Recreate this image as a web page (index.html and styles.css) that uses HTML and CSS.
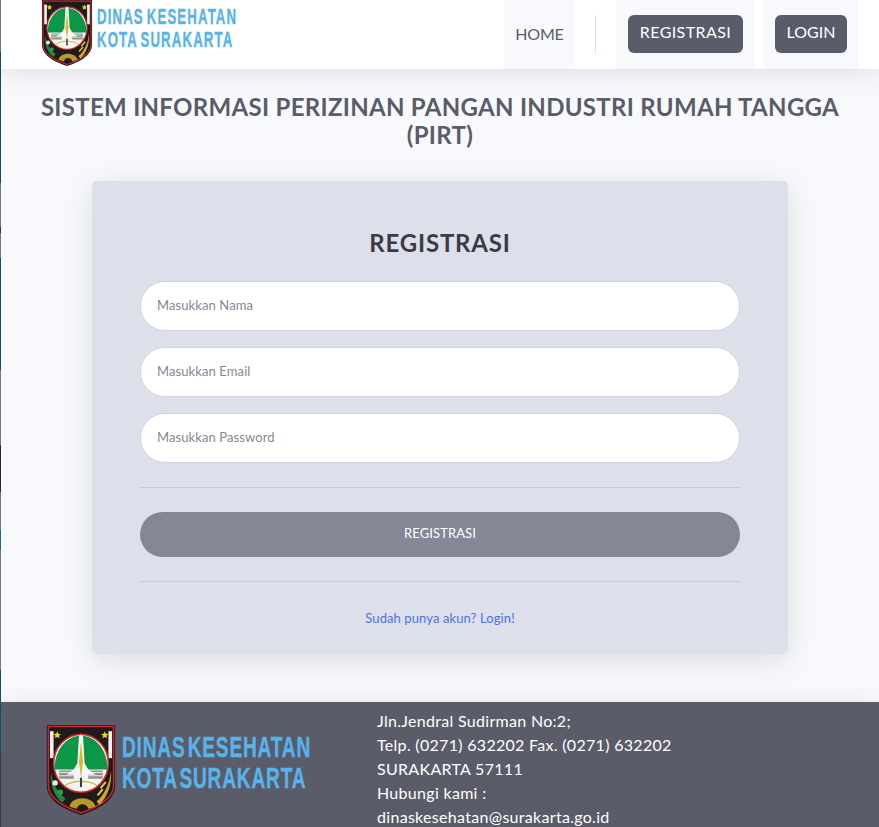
FILE: index.html
```html
<!DOCTYPE html>
<html lang="en">
<head>
    <meta charset="UTF-8">
    <meta name="viewport" content="width=device-width, initial-scale=1.0">
    <title>Registrasi PIRT</title>
    <link rel="stylesheet" href="styles.css">
</head>
<body>
    <svg width="0" height="0" class="defs">
        <symbol id="crest" viewBox="1 1 66 87">
            <path d="M1 1H67V60C67 74 50 83 34 88C18 83 1 74 1 60Z" fill="#1f1b1c"/>
            <path d="M2.5 2.5H65.5V60C65.5 72 49 81 34 86C19 81 2.5 72 2.5 60Z" fill="none" stroke="#d2232a" stroke-width="1.4"/>
            <rect x="4" y="7" width="3.5" height="26" fill="#f2f2f2"/>
            <rect x="60.5" y="7" width="3.5" height="26" fill="#f2f2f2"/>
            <path d="M11 7l1 2.4 2.6.2-2 1.7.7 2.6-2.3-1.4-2.3 1.4.7-2.6-2-1.7 2.6-.2z" fill="#f5d327"/>
            <path d="M57 7l1 2.4 2.6.2-2 1.7.7 2.6-2.3-1.4-2.3 1.4.7-2.6-2-1.7 2.6-.2z" fill="#f5d327"/>
            <ellipse cx="34" cy="38" rx="26.5" ry="28" fill="#f4f4ee" stroke="#d2232a" stroke-width="1.6"/>
            <path d="M8.5 44C8 27 19 11.5 34 11.5C49 11.5 60 27 59.5 44Z" fill="#0a9848"/>
            <path d="M13 45H27V53H13ZM41 45H55V53H41Z" fill="#8f8f8f"/>
            <path d="M13 47H27M13 50H27M41 47H55M41 50H55" stroke="#e8e8e8" stroke-width="1"/>
            <path d="M18 60C25 54 43 54 50 60" fill="none" stroke="#c9b84a" stroke-width="1.2"/>
            <path d="M32 12C32 10 36 10 36 12L37.5 38L41 44L48 49H20L27 44L30.5 38Z" fill="#f7f7f7"/>
            <path d="M34 17L36 37L34 52L32 37Z" fill="#d9b92c"/>
            <rect x="33" y="52" width="2" height="9" fill="#3c3c3c"/>
            <path d="M5 46C6 56 10 65 19 72L16 76C8 70 4 59 5 46Z" fill="#1f8a3e"/>
            <circle cx="9" cy="57" r="2.6" fill="#e6efe6"/>
            <circle cx="14" cy="66" r="2.6" fill="#2aa04c"/>
            <path d="M63 45C62 57 57 68 49 75L52 78C60 70 64 58 63 45Z" fill="#c9aa2c"/>
            <path d="M58 56L53 62M55 63L50 69" stroke="#e0c53c" stroke-width="2"/>
            <path d="M23 80C24 69 46 69 48 80L41 82C40 76 31 76 30 82Z" fill="#b8982a"/>
        </symbol>
    </svg>

    <nav class="topbar">
        <a href="#" class="brand">
            <svg class="brand-crest"><use href="#crest"/></svg>
            <span class="brand-text">
                <span>DINAS KESEHATAN</span>
                <span>KOTA SURAKARTA</span>
            </span>
        </a>
        <ul class="nav-list">
            <li class="nav-item home"><a href="#" class="nav-link">HOME</a></li>
            <li class="divider"></li>
            <li class="nav-item reg"><a href="#" class="nav-btn">REGISTRASI</a></li>
            <li class="nav-item login"><a href="#" class="nav-btn">LOGIN</a></li>
        </ul>
    </nav>

    <main class="content">
        <h1 class="page-title">SISTEM INFORMASI PERIZINAN PANGAN INDUSTRI RUMAH TANGGA (PIRT)</h1>
        <div class="card">
            <h2>REGISTRASI</h2>
            <form>
                <input type="text" class="field" placeholder="Masukkan Nama">
                <input type="email" class="field" placeholder="Masukkan Email">
                <input type="password" class="field" placeholder="Masukkan Password">
                <hr>
                <button type="button" class="submit">REGISTRASI</button>
                <hr>
            </form>
            <a href="#" class="login-link">Sudah punya akun? Login!</a>
        </div>
    </main>

    <footer class="footer">
        <div class="footer-brand">
            <svg class="footer-crest"><use href="#crest"/></svg>
            <span class="footer-text">
                <span>DINAS KESEHATAN</span>
                <span>KOTA SURAKARTA</span>
            </span>
        </div>
        <address class="footer-info">
            Jln.Jendral Sudirman No:2;<br>
            Telp. (0271) 632202 Fax. (0271) 632202<br>
            SURAKARTA 57111<br>
            Hubungi kami :<br>
            dinaskesehatan@surakarta.go.id
        </address>
    </footer>
</body>
</html>
```

FILE: styles.css
```css
* {
    box-sizing: border-box;
}
html, body {
    height: 827px;
    overflow: hidden;
}
body {
    margin: 0;
    padding-left: 1px;
    background-color: #f8f9fc;
    /* sliver of another window showing down the left edge */
    background-image: linear-gradient(to bottom,
        #777 0, #777 52px,
        #1a4a70 52px, #1a4a70 183px,
        #777 183px, #777 227px,
        #333 227px, #333 233px,
        #777 233px, #777 258px,
        #1a4a70 258px, #1a4a70 370px,
        #777 370px, #777 445px,
        #252a30 445px, #252a30 492px,
        #777 492px, #777 530px,
        #1f6a8a 530px, #1f6a8a 550px,
        #777 550px, #777 670px,
        #1a4a70 670px, #1a4a70 752px,
        #3a3a3c 752px, #3a3a3c 827px);
    background-repeat: no-repeat;
    background-size: 1px 100%;
    font-family: Lato, "Open Sans", sans-serif;
    color: #5a5c69;
    display: flex;
    flex-direction: column;
}
a {
    text-decoration: none;
}
.defs {
    position: absolute;
}
.topbar {
    height: 69px;
    flex: none;
    background: white;
    box-shadow: 0 2px 28px rgba(58, 59, 69, 0.15);
    display: flex;
    justify-content: space-between;
    padding: 0 20px 0 40px;
    position: relative;
}
.brand {
    display: flex;
    align-items: flex-start;
}
.brand-crest {
    width: 52px;
    height: 66px;
}
.brand-text {
    display: flex;
    flex-direction: column;
    margin: 5px 0 0 4px;
    color: #56b4ea;
    font: bold 22px/23px "Liberation Sans", sans-serif;
    -webkit-text-stroke: 0.4px #56b4ea;
    transform: scaleX(0.6);
    transform-origin: left top;
    letter-spacing: 1.9px;
    word-spacing: -3px;
    white-space: nowrap;
    width: 140px;
}
.nav-list {
    list-style: none;
    margin: 0;
    padding: 0;
    display: flex;
    font-size: 16px;
}
.nav-item {
    background: #f8f9fc;
    display: flex;
    align-items: center;
    justify-content: center;
}
.home {
    width: 71px;
}
.reg {
    width: 139px;
}
.login {
    width: 96px;
    margin-left: 8px;
}
.divider {
    width: 1px;
    height: 38px;
    margin: 15px 20px 0;
    background: #dddfeb;
}
.nav-link {
    color: #5a5c69;
    padding-bottom: 2px;
    letter-spacing: -0.2px;
}
.nav-btn {
    background: #5a5c69;
    color: white;
    border-radius: 6px;
    height: 38px;
    margin-top: -1px;
    padding: 0 12px;
    line-height: 34px;
}
.reg .nav-btn {
    letter-spacing: 0.4px;
}
.content {
    flex: 1;
    padding: 24px 20px 0;
}
.page-title {
    margin: 0;
    font-size: 24px;
    line-height: 28px;
    font-weight: 700;
    letter-spacing: 0.3px;
    text-align: center;
}
.card {
    width: 696px;
    height: 473px;
    margin: 32px 0 0 71px;
    padding: 48px;
    background: #dddfeb;
    border-radius: 5px;
    box-shadow: 0 6px 28px rgba(58, 59, 69, 0.15);
}
.card h2 {
    margin: 0 0 24px;
    font-size: 24px;
    line-height: 28px;
    font-weight: 700;
    letter-spacing: 0.8px;
    text-align: center;
    color: #3a3b45;
}
.field {
    display: block;
    width: 100%;
    height: 50px;
    margin-bottom: 16px;
    padding: 0 16px 2px;
    background: white;
    border: 1px solid #d1d3e2;
    border-radius: 25px;
    font: 13px Lato, sans-serif;
    letter-spacing: 0.1px;
}
.field::placeholder {
    color: #858796;
    opacity: 1;
}
hr {
    border: 0;
    border-top: 1px solid #c9cad3;
    margin: 24px 0;
}
.submit {
    display: block;
    width: 100%;
    height: 45px;
    padding: 0 0 3px;
    border: 0;
    border-radius: 23px;
    background: #858796;
    color: white;
    font: 13px Lato, sans-serif;
    letter-spacing: 0.1px;
}
.login-link {
    display: block;
    margin-top: 28px;
    text-align: center;
    font-size: 13px;
    letter-spacing: 0.1px;
    color: #4e73df;
}
.footer {
    height: 125px;
    flex: none;
    background: #5a5c69;
    color: white;
    display: flex;
    position: relative;
    box-shadow: 0 -2px 20px rgba(58, 59, 69, 0.08);
}
.footer-brand {
    display: flex;
    width: 376px;
    padding: 23px 0 0 45px;
}
.footer-crest {
    width: 70px;
    height: 90px;
}
.footer-text {
    display: flex;
    flex-direction: column;
    margin: 7px 0 0 6px;
    color: #56b4ea;
    font: bold 29px/31px "Liberation Sans", sans-serif;
    -webkit-text-stroke: 0.4px #56b4ea;
    transform: scaleX(0.66);
    transform-origin: left top;
    letter-spacing: 1.2px;
    word-spacing: -6px;
    white-space: nowrap;
    width: 190px;
}
.footer-info {
    padding-top: 7px;
    font-style: normal;
    font-size: 16px;
    line-height: 24px;
    letter-spacing: 0.3px;
}
```
